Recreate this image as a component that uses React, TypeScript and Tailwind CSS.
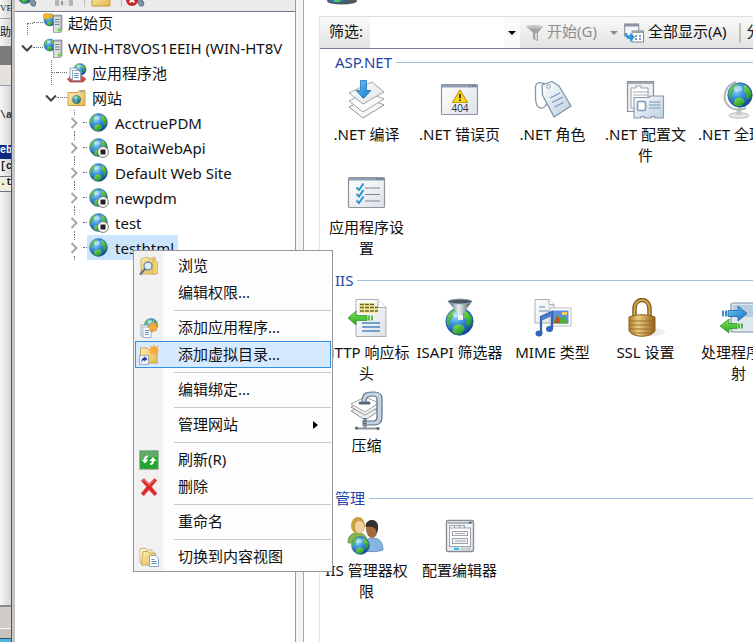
import { useState, type ReactNode } from 'react'

type IconProps = { className?: string }

function Gradients() {
  return (
    <svg className="absolute h-0 w-0" aria-hidden="true">
      <defs>
        <radialGradient id="sea" cx="0.35" cy="0.3" r="0.75">
          <stop offset="0" stopColor="#9fdcf8" />
          <stop offset="0.4" stopColor="#3d94e0" />
          <stop offset="1" stopColor="#15408f" />
        </radialGradient>
        <linearGradient id="land" x1="0" y1="0" x2="0.6" y2="1">
          <stop offset="0" stopColor="#8fe04a" />
          <stop offset="1" stopColor="#1f9a30" />
        </linearGradient>
        <linearGradient id="paper" x1="0" y1="0" x2="1" y2="1">
          <stop offset="0" stopColor="#ffffff" />
          <stop offset="1" stopColor="#dde2e8" />
        </linearGradient>
        <linearGradient id="folder" x1="0" y1="0" x2="1" y2="1">
          <stop offset="0" stopColor="#fdeeb0" />
          <stop offset="1" stopColor="#e3b851" />
        </linearGradient>
        <linearGradient id="metal" x1="0" y1="0" x2="1" y2="0">
          <stop offset="0" stopColor="#4d5a67" />
          <stop offset="0.45" stopColor="#e9eff4" />
          <stop offset="1" stopColor="#3a4a58" />
        </linearGradient>
        <linearGradient id="blue" x1="0" y1="0" x2="1" y2="1">
          <stop offset="0" stopColor="#6cc6f8" />
          <stop offset="1" stopColor="#1774c4" />
        </linearGradient>
        <linearGradient id="gold" x1="0" y1="0" x2="1" y2="0">
          <stop offset="0" stopColor="#b07c2c" />
          <stop offset="0.35" stopColor="#eccb7c" />
          <stop offset="1" stopColor="#94631a" />
        </linearGradient>
        <linearGradient id="green" x1="0" y1="0" x2="0" y2="1">
          <stop offset="0" stopColor="#7be75a" />
          <stop offset="1" stopColor="#26a51f" />
        </linearGradient>
        <linearGradient id="tag" x1="0" y1="0" x2="1" y2="1">
          <stop offset="0" stopColor="#ffffff" />
          <stop offset="1" stopColor="#b9cfe0" />
        </linearGradient>
      </defs>
    </svg>
  )
}

function Sphere({ x, y, size }: { x: number; y: number; size: number }) {
  return (
    <g transform={`translate(${x} ${y}) scale(${size / 20})`}>
      <circle cx="10" cy="10" r="9.4" fill="url(#sea)" stroke="#2a5f9f" strokeWidth="0.6" />
      <path d="M1.5 7C3 3.5 6 1.4 8.4 1.2L7.5 4 5.6 5.2 5 8.2 3 9.6 2.8 13.4C1 11.4.8 9 1.5 7Z" fill="url(#land)" opacity="0.85" />
      <path d="M12.4 2.2c3 .8 5.3 3 6.2 5.8l-.4 4-2.2 1.6-1.3-2.4.4-2.6-2.5-1.3.9-2.2Z" fill="url(#land)" />
      <path d="M6 13.2l3.4-1.4 3.6 1.4.6 2.4-2.8 3.2c-2.4.3-4.4-.5-5.6-1.6Z" fill="url(#land)" />
      <ellipse cx="8.5" cy="5" rx="3.4" ry="2.2" fill="#fff" opacity="0.4" />
    </g>
  )
}

function GlobeIcon({ className = 'h-5 w-5' }: IconProps) {
  return (
    <svg viewBox="0 0 20 20" className={className} aria-hidden="true">
      <Sphere x={0} y={0} size={19} />
    </svg>
  )
}

function StoppedGlobeIcon() {
  return (
    <svg viewBox="0 0 20 20" className="h-5 w-5" aria-hidden="true">
      <Sphere x={0} y={0} size={19} />
      <circle cx="14" cy="14" r="5.4" fill="#fff" stroke="#77797c" strokeWidth="1" />
      <rect x="11.5" y="11.5" width="5" height="5" fill="#222" />
    </svg>
  )
}

function ServerIcon({ start = false }: { start?: boolean }) {
  return (
    <svg viewBox="0 0 20 20" className="h-5 w-5" aria-hidden="true">
      <Sphere x={0.5} y={0.5} size={13} />
      {start && <path d="M0 2l3-2 3 1.6L9.6.8 9 5.4 6.6 4 4.4 6.6.6 5Z" fill="#f2b632" stroke="#c98612" strokeWidth="0.5" />}
      <path d="M10.5 3.5l2-1.5H19v15.5l-1.5 2h-7Z" fill="#a9b0b6" stroke="#6e767c" strokeWidth="0.6" />
      <path d="M11 3.8h6.2v15.4H11Z" fill="#d9dde0" />
      <path d="M12 6.5h4.4M12 9h4.4M12 11.5h4.4" stroke="#6d757b" strokeWidth="0.9" />
      <rect x="14.8" y="15.6" width="2.8" height="2.8" fill="#5fdb2c" />
    </svg>
  )
}

function PoolIcon() {
  return (
    <svg viewBox="0 0 20 20" className="h-5 w-5" aria-hidden="true">
      <Sphere x={6.5} y={0} size={13} />
      <path d="M0.5 16l3-2.500h12l3.500 2.500-3 3H3Z" fill="#d84a3c" stroke="#9f2d22" strokeWidth="0.6" />
      <path d="M3 5h7v11H3Z" fill="#f4f8fc" stroke="#7f95aa" strokeWidth="0.8" />
      <path d="M5.500 7.5h6l2 2V17.500H5.500Z" fill="#fff" stroke="#7f95aa" strokeWidth="0.8" />
      <path d="M7.2 10.500h4.5M7.2 12.500h4.5M7.2 14.500h4.5" stroke="#4c7eb6" strokeWidth="0.9" />
    </svg>
  )
}

function SitesIcon() {
  return (
    <svg viewBox="0 0 20 20" className="h-5 w-5" aria-hidden="true">
      <path d="M1 4.5h9.5L12 2.5h6V17.5H1Z" fill="url(#folder)" stroke="#c39b3f" strokeWidth="0.9" />
      <path d="M13 3.8h4" stroke="#6fa7d8" strokeWidth="1" />
      <Sphere x={5} y={7} size={9} />
    </svg>
  )
}

function BrowseIcon() {
  return (
    <svg viewBox="0 0 20 20" className="h-5 w-5" aria-hidden="true">
      <path d="M2 3l6-2 2 1.5 6-1V15l2 3H2Z" fill="url(#folder)" stroke="#c7a34b" strokeWidth="0.8" />
      <path d="M14 3l4.5 3v11L14 18.5Z" fill="#f2d36e" stroke="#c7a34b" strokeWidth="0.6" />
      <circle cx="9" cy="10" r="4" fill="#d9eefb" stroke="#7d8d99" strokeWidth="1.4" />
      <path d="M6 13l-4.5 5" stroke="#647582" strokeWidth="2" strokeLinecap="round" />
    </svg>
  )
}

function Spark({ x, y }: { x: number; y: number }) {
  return (
    <path
      transform={`translate(${x} ${y})`}
      d="M0-6l1.4 3.3L4.6-4.4 3.2-1.1 6 0 3.2 1.3 4.4 4.4 1.2 3.2 0 6-1.2 3.2-4.4 4.4-3.2 1.3-6 0-3.2-1.1-4.6-4.4-1.4-2.7Z"
      fill="#f9a83a"
    />
  )
}

function AddAppIcon() {
  return (
    <svg viewBox="0 0 20 20" className="h-5 w-5" aria-hidden="true">
      <Sphere x={5} y={0} size={14} />
      <path d="M2 7h7v11H2Z" fill="#eef4fa" stroke="#8aa0b4" strokeWidth="0.8" />
      <path d="M4 9h5l3 2.5V19.5H4Z" fill="#fff" stroke="#8aa0b4" strokeWidth="0.8" />
      <path d="M5.8 12.5h4M5.8 14.5h4M5.8 16.5h4" stroke="#5585b8" strokeWidth="0.9" />
      <Spark x={14} y={9} />
    </svg>
  )
}

function AddDirIcon() {
  return (
    <svg viewBox="0 0 20 20" className="h-5 w-5" aria-hidden="true">
      <path d="M1.5 3h7l1.5 2h8v13H1.5Z" fill="url(#folder)" stroke="#c79b45" strokeWidth="0.9" />
      <Spark x={15} y={5} />
      <rect x="0.6" y="10.6" width="8.8" height="8.8" fill="#f7f7fa" stroke="#9aa4b4" strokeWidth="0.9" />
      <path d="M3 18c-1-3.500.5-5.200 2.300-5.200V11.200L8.500 14l-3.200 2.500v-1.600c-1.200 0-2.200.7-2.300 3.100Z" fill="#20399c" />
    </svg>
  )
}

function RefreshIcon() {
  return (
    <svg viewBox="0 0 20 20" className="h-5 w-5" aria-hidden="true">
      <rect x="0.8" y="0.8" width="18.4" height="18.4" fill="#1fa62c" stroke="#8da58d" strokeWidth="1" />
      <path d="M1.5 1.5h17v6c-5-2.4-11 3-17 1Z" fill="#7fae84" opacity="0.7" />
      <path d="M9 5.5c-2.8 0-4 1.2-4 4H2.4L6 13.6l3.6-4.1H7.2C7.2 8 7.8 7.4 9 7.2Z" fill="#fff" />
      <path d="M11 15c2.8 0 4-1.2 4-4h2.6L14 6.9l-3.6 4.1h2.4c0 1.5-.6 2.1-1.8 2.3Z" fill="#fff" />
    </svg>
  )
}

function DeleteIcon() {
  return (
    <svg viewBox="0 0 20 20" className="h-5 w-5" aria-hidden="true">
      <path d="M2 3.6L5 1.4l5.2 5.4 5-5.2 2.8 1.6-5.4 6.6 5.6 7-2.8 2-5.4-6-5.2 6-2.8-2.4 5.6-6.6Z" fill="#e3262a" stroke="#c96a6a" strokeWidth="0.6" />
      <path d="M3.2 3.7L5 2.6l5.2 5.6 5-5.2" fill="none" stroke="#f58a80" strokeWidth="0.9" />
    </svg>
  )
}

function ContentViewIcon() {
  return (
    <svg viewBox="0 0 20 20" className="h-5 w-5" aria-hidden="true">
      <path d="M1 1.5h6l1 1.5h5v13H1Z" fill="#fbf2d0" stroke="#cbb375" strokeWidth="0.9" />
      <path d="M4 4.5h5l1.5 1.5h6V18H2.5Z" fill="url(#folder)" stroke="#c29f52" strokeWidth="0.9" />
      <path d="M10.5 8.5h6l3 3v8h-9Z" fill="#fff" stroke="#7f9fc0" strokeWidth="0.9" />
      <path d="M12.4 12.5h3M12.4 14.5h5.2M12.4 16.5h5.2" stroke="#4a86c4" strokeWidth="1" />
    </svg>
  )
}

function ConnectIcon({ error = false }: { error?: boolean }) {
  return (
    <svg viewBox="0 0 20 20" className="h-5 w-5 shrink-0" aria-hidden="true">
      <Sphere x={0} y={3} size={14} />
      <path d="M11 12c4 0 6 1 7 4l-1 3h-3l-2-3Z" fill="#7b95a8" stroke="#4f6778" strokeWidth="0.8" />
      {error && (
        <>
          <circle cx="6" cy="13" r="6" fill="#c9252b" />
          <path d="M3.6 10.6l4.8 4.8M8.4 10.6l-4.8 4.8" stroke="#fff" strokeWidth="2" />
        </>
      )}
    </svg>
  )
}

function WindowFrame({ children }: { children: ReactNode }) {
  return (
    <>
      <rect x="1.5" y="4.5" width="36" height="30" rx="1" fill="url(#paper)" stroke="#8d949b" strokeWidth="1.2" />
      <path d="M2 5h35v2.5H2Z" fill="#8e9fb4" />
      <path d="M29 6h1.5M32 6h1.5M34.6 6h1.5" stroke="#4d5a6b" strokeWidth="1.2" />
      {children}
    </>
  )
}

const featureArt: Record<string, ReactNode> = {
  compile: (
    <>
      <path d="M2 27l18-9 17 7-21 13Z" fill="#f7f7f7" stroke="#8a8a8a" strokeWidth="0.9" />
      <path d="M2 21l18-9 17 7-21 13Z" fill="#fbfbfb" stroke="#9a9a9a" strokeWidth="0.9" />
      <path d="M2 13L25 2l12 10-21 12Z" fill="url(#paper)" stroke="#9a9a9a" strokeWidth="0.9" />
      <path d="M13.5 0.500h6v10h4.5L16.5 18.500 9 10.500h4.5Z" fill="url(#blue)" stroke="#1c75bb" strokeWidth="0.8" />
    </>
  ),
  error: (
    <WindowFrame>
      <path d="M20 10L27.5 22.500h-15Z" fill="#f9d71c" stroke="#c99c00" strokeWidth="1.2" strokeLinejoin="round" />
      <path d="M20 14v4.2M20 19.500v1.6" stroke="#222" strokeWidth="1.6" />
      <text x="20" y="32" textAnchor="middle" fontSize="10" fontFamily="Open Sans, sans-serif" fill="#2c3035">
        404
      </text>
    </WindowFrame>
  ),
  roles: (
    <>
      <path d="M12 4C6 1 2 3 2.500 9c.4 6-1.500 15 3 18s9-1 8-7" fill="none" stroke="#8a98a5" strokeWidth="1.3" />
      <path d="M9 5l10-3.500L26 6l12 20-17 11L9.500 15Z" fill="url(#tag)" stroke="#7890a4" strokeWidth="1.2" strokeLinejoin="round" />
      <circle cx="15.500" cy="6.500" r="1.800" fill="#fff" stroke="#8090a0" />
      <path d="M17 18l10-5M19 22.500l11-5.500M21.500 27l9-4.500" stroke="#8092c4" strokeWidth="1.200" />
    </>
  ),
  profile: (
    <>
      <path d="M1.500 1.500h26v30h-26Z" fill="#eef0f2" stroke="#8a9096" strokeWidth="1.2" />
      <path d="M2 2h25v2H2Z" fill="#a4abb3" />
      <path d="M5 8h5V6h5v2h7v20H5Z" fill="#fff" stroke="#9ca2a8" />
      <path d="M7 12h16M7 15h16" stroke="#a7adb3" />
      <path d="M8 17.500h15l1.500-1.500h13v22h-9v-1.500h-3V38H18v-1.500h-3V38H8Z" fill="url(#tag)" stroke="#8a98a5" strokeWidth="1.1" />
      <rect x="11.500" y="21.500" width="8" height="9" rx="1.500" fill="#fff" stroke="#7b9cc0" strokeWidth="1.600" />
      <path d="M23 22h11.500M23 25h11.500M23 28h11.500" stroke="#7d98b4" />
    </>
  ),
  globalization: (
    <>
      <ellipse cx="20" cy="35.500" rx="10" ry="2.800" fill="#e4e6e8" stroke="#a9adb1" strokeWidth="0.800" />
      <path d="M18 28h4l1 7h-6Z" fill="#c6cacd" />
      <path d="M17 2C6 5 3 18 8 24c4 6 12 7 19 4" fill="none" stroke="#b1b6ba" strokeWidth="2" />
      <Sphere x={8} y={2} size={26} />
    </>
  ),
  settings: (
    <WindowFrame>
      <path d="M18 15h15M18 21.500h15M18 28h15" stroke="#7f8396" strokeWidth="1.200" />
      <path d="M9.500 14.500l2.500 2.500 4.500-6.500M9.500 21l2.500 2.500L16.500 17M9.500 27.500L12 30l4.500-6.500" fill="none" stroke="#2596d1" strokeWidth="2" />
    </WindowFrame>
  ),
  headers: (
    <>
      <path d="M9 1.500h22l8 8v29H9Z" fill="url(#paper)" stroke="#a9aeb3" />
      <path d="M31 1.500v8h8" fill="#fff" stroke="#a9aeb3" />
      <path d="M12 5h15v3h4v7H12Z" fill="#f7e88c" />
      <path d="M13 6.500h14M13 9.500h18M13 13h18" stroke="#6a6231" strokeWidth="1.300" strokeDasharray="4 1" />
      <path d="M15 25h18M15 29h18M15 33h18" stroke="#4a86c0" strokeWidth="1.300" />
      <path d="M1 20l8-7v4.500h11v5H9V27Z" fill="url(#green)" stroke="#37942a" strokeWidth="0.800" />
      <path d="M22 17.500v5M25 17.500v5" stroke="#4cbd35" strokeWidth="1.800" />
    </>
  ),
  isapi: (
    <>
      <Sphere x={5} y={9} size={29} />
      <path d="M8 3.500h24L23 16v6h-5v-6Z" fill="url(#metal)" />
      <ellipse cx="20" cy="3.500" rx="12" ry="2.500" fill="#4a5866" stroke="#a6b1ba" strokeWidth="0.800" />
      <path d="M18 17h5v5l-5-1Z" fill="#eef4f8" />
    </>
  ),
  mime: (
    <>
      <path d="M2 1.500h14l5 5V25H2Z" fill="url(#paper)" stroke="#a9b0b7" />
      <path d="M16 1.500v5h5" fill="#fff" stroke="#a9b0b7" />
      <path d="M6 9h6M6 13h11" stroke="#5d8cc0" />
      <rect x="17" y="10" width="21" height="18" fill="#fff" stroke="#b8bcc1" />
      <rect x="19.500" y="12.500" width="16" height="13" fill="#5b8ee0" />
      <path d="M19.500 25.500l5-9 4 4 3-2 4 7Z" fill="#4fae37" />
      <path d="M21 25l3-7 3 3v4Z" fill="#c94b2c" />
      <path d="M29 14h5v3h-5Z" fill="#f4d14c" />
      <path d="M8 35V19l11-5v17" fill="none" stroke="#3661b0" strokeWidth="2.200" />
      <path d="M8 19l11-5v4L8 23Z" fill="#4d7bcb" />
      <ellipse cx="6" cy="35.500" rx="3.500" ry="3" fill="#3263bf" />
      <ellipse cx="16.500" cy="31" rx="3.500" ry="3" fill="#3263bf" />
    </>
  ),
  ssl: (
    <>
      <ellipse cx="26" cy="34" rx="13" ry="4" fill="#ececec" />
      <path d="M8.500 20v-9c0-12 15-12 15 0v9" fill="none" stroke="#7d5a1c" strokeWidth="4.500" />
      <path d="M8.500 20v-9c0-12 15-12 15 0v9" fill="none" stroke="#d0a650" strokeWidth="2" />
      <path d="M3 19c8-3 18-3 26 0v14c-4 7-22 7-26 0Z" fill="url(#gold)" stroke="#8a5f1c" />
      <path d="M3.500 23h25M3.500 27h25M3.500 31h25M5.500 35h20" stroke="#96692a" strokeWidth="0.900" />
    </>
  ),
  handlers: (
    <>
      <rect x="12" y="5" width="32" height="29" rx="2" fill="#dfe7f1" stroke="#7f92aa" strokeWidth="1.200" />
      <path d="M14 7h28v12H14Z" fill="#b8cce2" />
      <path d="M4 12.500v6M7 12.500v6" stroke="#3180c8" strokeWidth="1.800" />
      <path d="M9 12.500h10V8l9 7.500L19 23v-4.500H9Z" fill="url(#blue)" stroke="#22629f" strokeWidth="0.800" />
      <path d="M1 28l9-7v4.500h8v5h-8V35Z" fill="url(#green)" stroke="#37942a" strokeWidth="0.800" />
      <path d="M20 25.500v5M23 25.500v5" stroke="#3bb52b" strokeWidth="1.800" />
    </>
  ),
  compression: (
    <>
      <path d="M4 20l14-6 14 6-14 9Z" fill="#ededed" stroke="#888" strokeWidth="0.900" />
      <path d="M4 16l14-7 14 7-14 8Z" fill="#f7f7f7" stroke="#888" strokeWidth="0.900" />
      <path d="M4 13l14-7 14 6-14 9Z" fill="#fff" stroke="#999" strokeWidth="0.900" />
      <path d="M15 10c0-9 6-9 12-9 6 0 8 2 8 7v18c0 6-3 8-8 8H16v-4h10c3 0 4-1 4-4V9c0-3-1-4-4-4-5 0-7 1-7 6" fill="#c3d3e2" stroke="#5f7386" strokeWidth="1.200" />
      <path d="M13 12h9" stroke="#5a6672" strokeWidth="3" strokeLinecap="round" />
      <path d="M18 27v10" stroke="#626c75" strokeWidth="3.500" strokeDasharray="1.500 0.800" />
      <path d="M10 37.500h20" stroke="#8d959c" strokeWidth="1.800" strokeLinecap="round" />
      <circle cx="9.500" cy="37" r="1.600" fill="#59626b" />
      <circle cx="31" cy="37.500" r="1.600" fill="#59626b" />
    </>
  ),
  permissions: (
    <>
      <path d="M1 27c0-8 4-10 10-10s9 3 9 10Z" fill="#86b653" stroke="#5f8d35" strokeWidth="0.800" />
      <ellipse cx="11" cy="9.500" rx="7" ry="8.500" fill="#c9a03d" />
      <ellipse cx="12.500" cy="11" rx="4.600" ry="6.200" fill="#f3cfa4" />
      <path d="M17 35c-1-10 3-13 9-13s10 4 10 12c-5 2-13 2-19 1Z" fill="#86b4e3" stroke="#5885b4" strokeWidth="0.800" />
      <ellipse cx="25" cy="13" rx="6" ry="9" fill="#a36b42" />
      <path d="M18.500 11c0-5 3-7 6.500-7s7 3 6 9l-2 4c1-6-4-7-10.500-6Z" fill="#33302f" />
      <Sphere x={4} y={20} size={19} />
    </>
  ),
  editor: (
    <>
      <rect x="6.500" y="4.500" width="27" height="31" rx="1.500" fill="url(#paper)" stroke="#878d93" strokeWidth="1.400" />
      <path d="M7.500 6h25v2h-25Z" fill="#a8b3c0" />
      <path d="M29 6.500h2.500" stroke="#444d80" strokeWidth="1.500" />
      <path d="M9.500 12v-2.500h5V12M14.500 12v-2.500h5V12M19.500 12v-2.500h5V12" fill="none" stroke="#9da2a8" />
      <rect x="9.500" y="12" width="21" height="18.500" fill="#fff" stroke="#9da2a8" />
      <rect x="12.500" y="15.500" width="15" height="4" fill="#fff" stroke="#9da2a8" />
      <rect x="12.500" y="22.500" width="15" height="5" fill="#f1f3f5" stroke="#9da2a8" />
      <path d="M15 25h11M15 17.500h10" stroke="#a3a8ad" />
      <path d="M14 32.800h5" stroke="#24b8e8" strokeWidth="2" />
      <path d="M20.500 32.800h4.500M26 32.800h4.500" stroke="#c1c6cb" strokeWidth="2" />
    </>
  ),
}

const tree = [
  { label: '起始页', depth: 0, icon: <ServerIcon start />, expander: 'first' },
  { label: 'WIN-HT8VOS1EEIH (WIN-HT8V', depth: 0, icon: <ServerIcon />, expander: 'open' },
  { label: '应用程序池', depth: 1, icon: <PoolIcon />, expander: 'none' },
  { label: '网站', depth: 1, icon: <SitesIcon />, expander: 'open' },
  { label: 'AcctruePDM', depth: 2, icon: <GlobeIcon />, expander: 'closed' },
  { label: 'BotaiWebApi', depth: 2, icon: <StoppedGlobeIcon />, expander: 'closed' },
  { label: 'Default Web Site', depth: 2, icon: <GlobeIcon />, expander: 'closed' },
  { label: 'newpdm', depth: 2, icon: <StoppedGlobeIcon />, expander: 'closed' },
  { label: 'test', depth: 2, icon: <StoppedGlobeIcon />, expander: 'closed' },
  { label: 'testhtml', depth: 2, icon: <GlobeIcon />, expander: 'closed' },
]

const indents = ['pl-1.5', 'pl-[30px]', 'pl-[53px]']

const menu: { label?: string; icon?: ReactNode; submenu?: boolean }[] = [
  { label: '浏览', icon: <BrowseIcon /> },
  { label: '编辑权限...' },
  {},
  { label: '添加应用程序...', icon: <AddAppIcon /> },
  { label: '添加虚拟目录...', icon: <AddDirIcon /> },
  {},
  { label: '编辑绑定...' },
  {},
  { label: '管理网站', submenu: true },
  {},
  { label: '刷新(R)', icon: <RefreshIcon /> },
  { label: '删除', icon: <DeleteIcon /> },
  {},
  { label: '重命名' },
  {},
  { label: '切换到内容视图', icon: <ContentViewIcon /> },
]

const groups = [
  {
    title: 'ASP.NET',
    items: [
      ['compile', '.NET 编译'],
      ['error', '.NET 错误页'],
      ['roles', '.NET 角色'],
      ['profile', '.NET 配置文件'],
      ['globalization', '.NET 全球化'],
      ['settings', '应用程序设置'],
    ],
  },
  {
    title: 'IIS',
    items: [
      ['headers', 'HTTP 响应标头'],
      ['isapi', 'ISAPI 筛选器'],
      ['mime', 'MIME 类型'],
      ['ssl', 'SSL 设置'],
      ['handlers', '处理程序映射'],
      ['compression', '压缩'],
    ],
  },
  {
    title: '管理',
    items: [
      ['permissions', 'IIS 管理器权限'],
      ['editor', '配置编辑器'],
    ],
  },
]

function Expander({ state }: { state: string }) {
  if (state === 'first') {
    return <span className="ml-1.5 h-3 w-1.5 self-end border-l border-t border-dotted border-gray-500" />
  }
  if (state === 'none') {
    return (
      <span className="ml-1.5 flex h-full w-1.5 items-center border-l border-dotted border-gray-500">
        <span className="flex-1 border-t border-dotted border-gray-500" />
      </span>
    )
  }
  const line = state === 'closed' ? 'border-l border-dotted border-gray-500' : ''
  return (
    <span className="flex h-full w-3 flex-col items-center">
      <span className={`w-px flex-1 ${line}`} />
      <button type="button" aria-label={state === 'open' ? '折叠' : '展开'} className="bg-white py-0.5">
        <svg viewBox="0 0 12 12" className="h-3 w-3" fill="none" strokeWidth="2">
          {state === 'open' ? (
            <path d="M1 3.500l5 5 5-5" stroke="#404040" />
          ) : (
            <path d="M3.500 1l5 5-5 5" stroke="#a6a6a6" />
          )}
        </svg>
      </button>
      <span className={`w-px flex-1 ${line}`} />
    </span>
  )
}

function SiteTree() {
  const [selected, setSelected] = useState('testhtml')

  return (
    <ul className="-mt-0.5 overflow-hidden">
      {tree.map((node) => (
        <li key={node.label} className={`flex h-[25px] items-center whitespace-nowrap ${indents[node.depth]}`}>
          <Expander state={node.expander} />
          <span className={`shrink-0 border-t border-dotted border-gray-500 ${node.depth === 2 ? 'ml-[3px] w-1' : 'w-2.5'}`} />
          <button
            type="button"
            onClick={() => setSelected(node.label)}
            className={`flex h-full items-center pr-1 ${node.depth === 2 ? 'gap-1.5 pl-0.5' : 'gap-[5px]'} ${selected === node.label ? 'bg-[#cce5ff]' : ''}`}
          >
            {node.icon}
            <span>{node.label}</span>
          </button>
        </li>
      ))}
    </ul>
  )
}

function ContextMenu() {
  return (
    <div
      role="menu"
      className="absolute left-[133px] top-[250px] w-[200px] border border-[#979797] bg-[linear-gradient(to_right,#f1f1f1_29px,#fdfdfd_29px)] p-px"
    >
      {menu.map((item, i) =>
        item.label ? (
          <button
            key={item.label}
            type="button"
            role="menuitem"
            className={`flex h-[27px] w-full items-center border pl-[3px] text-left ${
              item.label === '添加虚拟目录...' ? 'border-[#3390e0] bg-[#d6eaff]' : 'border-transparent'
            }`}
          >
            <span className="w-[39px]">{item.icon}</span>
            <span className="flex-1 pb-0.5">{item.label}</span>
            {item.submenu && (
              <svg viewBox="0 0 5 8" className="mr-3 h-2 w-[5px]">
                <path d="M0 0l5 4-5 4Z" fill="#000" />
              </svg>
            )}
          </button>
        ) : (
          <div key={i} role="separator" className="flex h-2 items-center pl-[39px]">
            <span className="h-px w-full bg-[#cbc8bd]" />
          </div>
        ),
      )}
    </div>
  )
}

function FilterBar() {
  return (
    <div className="flex h-[33px] items-stretch overflow-hidden whitespace-nowrap border-b border-t border-b-[#77778f] border-t-[#dcdcdc] bg-linear-to-b from-[#fafafa] to-[#e4e3e4]">
      <label htmlFor="filter" className="flex w-[50px] shrink-0 items-center pb-1 pl-[9px]">
        筛选:
      </label>
      <input id="filter" className="w-[134px] shrink-0 bg-white px-1 outline-none" />
      <button type="button" aria-label="筛选记录" className="flex w-4 shrink-0 items-center justify-center bg-[#fafafa]">
        <svg viewBox="0 0 8 4" className="h-1 w-2">
          <path d="M0 0h8L4 4Z" fill="#000" />
        </svg>
      </button>
      <button type="button" className="ml-1.5 flex shrink-0 items-center gap-[3px] text-[#8d8d8d]">
        <svg viewBox="0 0 18 18" className="h-[18px] w-[18px]">
          <path d="M0 2h17l-5 7v8l-5-2V9Z" fill="#a3a3a3" />
          <ellipse cx="8.500" cy="2.800" rx="8" ry="1.800" fill="#c4c4c4" />
          <path d="M9 9v6l2 1V9Z" fill="#d7d7d7" />
        </svg>
        <span className="pb-1">开始(G)</span>
        <svg viewBox="0 0 8 4" className="ml-2.5 h-1 w-2">
          <path d="M0 0h8L4 4Z" fill="#8d8d8d" />
        </svg>
      </button>
      <button type="button" className="ml-1.5 flex shrink-0 items-center gap-1">
        <svg viewBox="0 0 20 20" className="h-5 w-5">
          <rect x="0.700" y="1" width="14" height="12" fill="#f4f6f8" stroke="#7e8790" />
          <path d="M1 1h13.500v2.500H1Z" fill="#8b96a4" />
          <rect x="8" y="8" width="11.500" height="11" fill="#fff" stroke="#7e8790" />
          <path d="M8 8h11.500v2H8Z" fill="#9aa4b0" />
          <path d="M11 13h2M15 13h2M11 16h2M15 16h2" stroke="#5b70bd" strokeWidth="1.600" />
          <path d="M1 10c0 4 2 6 5 6v3l5-5-5-4v3c-2 0-3-1-3-3Z" fill="#2f93d6" />
        </svg>
        <span className="pb-1">全部显示(A)</span>
      </button>
      <span className="ml-3 mr-1.5 h-5 w-0.5 shrink-0 self-center bg-[#c3bfb5]" />
      <button type="button" className="shrink-0 pb-1">
        分组依据:
      </button>
    </div>
  )
}

function FeatureGroup({ title, items }: { title: string; items: string[][] }) {
  return (
    <section className="mb-2.5">
      <h2 className="flex h-[22px] items-center gap-1 pl-[15px] text-[#1e46a8]">
        {title}
        <span className="h-px flex-1 bg-[#a3bfe0]" />
      </h2>
      <div className="mt-[7px] grid auto-rows-[86px] grid-cols-[repeat(5,93px)] gap-y-[7px]">
        {items.map(([art, label]) => (
          <button key={art} type="button" className="flex flex-col items-center gap-1 px-0.5 leading-[21px]">
            <svg viewBox="0 0 40 40" className="h-10 w-10 shrink-0" aria-hidden="true">
              {featureArt[art]}
            </svg>
            <span>{label}</span>
          </button>
        ))}
      </div>
    </section>
  )
}

function BackgroundWindow() {
  return (
    <div className="flex w-3 shrink-0 flex-col overflow-hidden whitespace-nowrap border-r border-[#555] bg-linear-to-r from-[#f5f6f5] to-[#d5d5d5] font-['Liberation_Mono','Noto_Sans_CJK_SC',monospace] text-[10px] leading-3">
      <div className="h-[18px] pt-0.5 font-['Liberation_Serif',serif] text-[9px]">VER</div>
      <div className="flex h-7 items-center justify-end border-t border-gray-400 text-[11px]">帮助</div>
      <div className="h-[19px] bg-[#7b7b7b]" />
      <div className="h-[21px] border-b border-gray-400 bg-[#e4e1dd]" />
      <div className="flex h-[59px] items-center font-bold text-[#333]">\a</div>
      <div className="h-[14px] bg-[#0c2a80] font-bold text-white">eb</div>
      <div className="h-[18px] border-b border-gray-500 pt-0.5 font-bold">[cl</div>
      <div className="h-[15px] border-b border-gray-500 bg-[#eeeedb] font-bold">.t</div>
      <div className="flex-1" />
      <div className="h-[23px] border-t-2 border-[#8d8d88] bg-[#d0ccc6]" />
      <div className="h-2.5 border-t border-gray-100 bg-[#c9c3bd]" />
      <div className="h-1 border-t border-[#27566e] bg-[#56b4e0]" />
    </div>
  )
}

export default function App() {
  return (
    <div className="relative flex h-screen overflow-hidden bg-white font-['Noto_Sans','Noto_Sans_CJK_SC',sans-serif] text-[15px] leading-5 text-[#111]">
      <Gradients />
      <BackgroundWindow />
      <nav className="w-[284px] shrink-0 overflow-hidden border-l-3 border-r border-l-[#c4c4c4] border-r-[#9c9c9c]">
        <div className="flex h-3 items-end overflow-hidden border-b border-[#77778f] bg-[#ebebeb] pb-1 pl-[3px]">
          <ConnectIcon />
          <svg viewBox="0 0 20 20" className="ml-4 h-5 w-5 shrink-0">
            <path d="M1 1h18v18H1Z" fill="#b5b5b8" />
            <path d="M5 12h10v7H5Z" fill="#e4e4e6" />
            <path d="M7 14h2v4H7Z" fill="#97979a" />
          </svg>
          <span className="ml-2.5 h-3 w-px shrink-0 bg-[#c3bfb5]" />
          <svg viewBox="0 0 20 20" className="ml-1.5 h-5 w-5 shrink-0">
            <path d="M1 2h18v17H1Z" fill="url(#folder)" stroke="#c39b3f" />
          </svg>
          <span className="ml-2.5 h-3 w-px shrink-0 bg-[#c3bfb5]" />
          <span className="ml-1 shrink-0">
            <ConnectIcon error />
          </span>
        </div>
        <SiteTree />
      </nav>
      <div className="w-2 shrink-0 border-r border-[#a8a8a8] bg-[#f4f4f4]" />
      <main className="min-w-0 flex-1 overflow-hidden pl-[15px]">
        <div className="flex h-4 items-start overflow-hidden pl-1.5">
          <svg viewBox="0 0 32 5" className="h-[5px] w-8">
            <ellipse cx="17" cy="1" rx="15" ry="3.500" fill="#4b5860" />
            <path d="M3 0h17c-3 3-13 4-17 0Z" fill="#2b71c4" />
            <path d="M8 0h8l-2 2h-4Z" fill="#59c34a" />
          </svg>
        </div>
        <div className="h-full border-l border-[#e4e4e4]">
          <FilterBar />
          <div className="overflow-hidden pt-0.5">
            {groups.map((group) => (
              <FeatureGroup key={group.title} title={group.title} items={group.items} />
            ))}
          </div>
        </div>
      </main>
      <ContextMenu />
    </div>
  )
}
